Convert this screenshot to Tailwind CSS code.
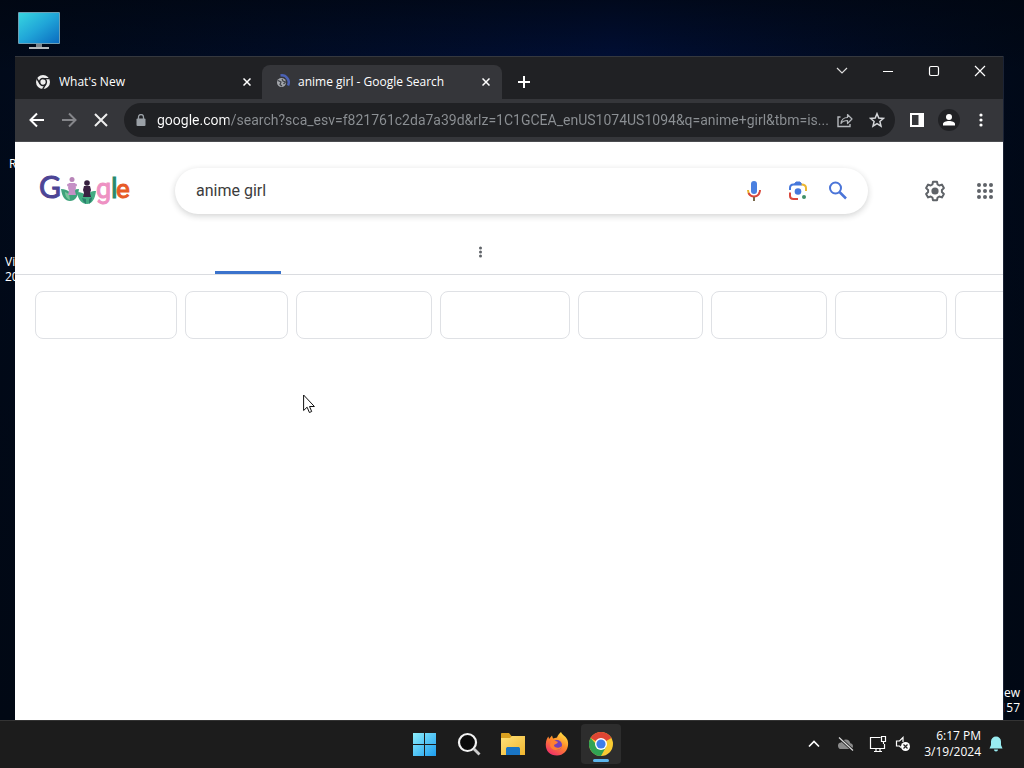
<!DOCTYPE html>
<html lang="en">
<head>
<meta charset="utf-8">
<meta name="viewport" content="width=device-width, initial-scale=1">
<title>anime girl - Google Search</title>
<script src="https://cdn.jsdelivr.net/npm/@tailwindcss/browser@4"></script>
</head>
<body class="flex h-screen flex-col overflow-hidden bg-[#010814] font-['Open_Sans','Noto_Sans',sans-serif]">

<main class="relative min-h-0 flex-1 overflow-hidden bg-linear-to-r from-[#010a1a] via-[#01103a] via-60% to-[#010918]">
  <div class="absolute inset-0 bg-linear-to-b from-[#010610]/70 via-transparent via-10% to-[#010814]"></div>

  <!-- Desktop icons -->
  <svg class="absolute top-3 left-[17px] h-[38px] w-11" viewBox="0 0 44 38" aria-label="This PC">
    <defs><linearGradient id="pc" x1="0" y1="0" x2="1" y2="1"><stop offset="0" stop-color="#37d5e0"/><stop offset=".5" stop-color="#20a5d8"/><stop offset="1" stop-color="#0b6cc0"/></linearGradient></defs>
    <rect x="1" y="0" width="42" height="32" rx="1" fill="#6f9fb4"/>
    <rect x="2" y="1" width="40" height="30" fill="url(#pc)"/>
    <path d="M19 32h6v4h-6z" fill="#7d858b"/><rect x="12" y="35" width="20" height="2" fill="#b4babd"/>
  </svg>
  <p class="absolute top-[156px] left-[9px] text-xs leading-[15px] text-white">R</p>
  <p class="absolute top-[254px] left-[5px] text-xs leading-[15px] text-white">Vi<br>20</p>
  <p class="absolute right-1 bottom-[5px] text-right text-xs leading-[15px] text-white">ew<br>157</p>

  <!-- Browser window -->
  <section class="absolute top-14 right-[21px] bottom-0 left-[15px] flex flex-col border-t border-[#35383e] bg-white shadow-[1px_0_0_#1b2335]">
    <div class="flex h-[42px] shrink-0 items-end bg-[#202124] text-xs text-white">
      <div class="ml-2 flex h-[34px] w-[239px] items-center pr-[7px] pl-3">
        <svg class="mr-2 size-4 shrink-0" viewBox="0 0 16 16"><circle cx="8" cy="8" r="7" fill="#eee"/><circle cx="8" cy="8" r="3.4" fill="none" stroke="#202124" stroke-width="1.5"/><path d="M8 4.6h6.4M5.1 9.8 1.8 4.3M10.9 9.8l-3.2 5.4" stroke="#202124" stroke-width="1.4"/></svg>
        <a href="#" class="flex-1 truncate">What's New</a>
        <button aria-label="Close What's New" class="grid size-4 place-items-center"><svg class="size-2" viewBox="0 0 8 8"><path d="M.5.5l7 7M7.500.5l-7 7" stroke="#fff" stroke-width="1.5"/></svg></button>
      </div>
      <div class="flex h-[34px] w-60 items-center rounded-t-lg bg-[#35363a] pr-2 pl-3">
        <svg class="mr-2 size-4 shrink-0" viewBox="0 0 16 16"><circle cx="7.500" cy="8.500" r="4.500" fill="#a4a7ac"/><path d="M4 6.500 7 8 6 10.500 8 12M8 5l1 2 2.500 1-2 2" fill="none" stroke="#3c3f45" stroke-width="1.200"/><path d="M6.500 1.500A7 7 0 0 1 14 11.500" fill="none" stroke="#4b62b5" stroke-width="2.500"/></svg>
        <a href="#" class="flex-1 truncate">anime girl - Google Search</a>
        <button aria-label="Close anime girl - Google Search" class="grid size-4 place-items-center"><svg class="size-2" viewBox="0 0 8 8"><path d="M.5.5l7 7M7.500.5l-7 7" stroke="#fff" stroke-width="1.5"/></svg></button>
      </div>
      <button aria-label="New tab" class="ml-2 grid h-[34px] w-7 place-items-center"><svg class="size-3" viewBox="0 0 12 12"><path d="M6 0v12M0 6h12" stroke="#fff" stroke-width="2"/></svg></button>
      <div class="ml-auto flex self-start">
        <button aria-label="Search tabs" class="grid h-7 w-[46px] place-items-center"><svg class="h-2 w-3" viewBox="0 0 12 8"><path d="M1 1l5 5 5-5" fill="none" stroke="#ddd" stroke-width="1.200"/></svg></button>
        <button aria-label="Minimize" class="grid h-7 w-[46px] place-items-center"><svg class="h-2 w-3" viewBox="0 0 12 8"><path d="M1 4.500h10" stroke="#fff"/></svg></button>
        <button aria-label="Maximize" class="grid h-7 w-[46px] place-items-center"><svg class="size-3" viewBox="0 0 12 12"><rect x="1.500" y="1.500" width="9" height="9" rx="1.500" fill="none" stroke="#fff" stroke-width="1.200"/></svg></button>
        <button aria-label="Close" class="grid h-7 w-[46px] place-items-center"><svg class="size-3" viewBox="0 0 12 12"><path d="M1 1l10 10M11 1 1 11" stroke="#fff" stroke-width="1.200"/></svg></button>
      </div>
    </div>

    <div class="flex h-[43px] shrink-0 items-center border-b border-[#4b4c50] bg-[#35363a] pr-1.5 pl-1.5">
      <button aria-label="Back" class="grid size-8 place-items-center"><svg class="size-4" viewBox="0 0 16 16"><path d="M15 8H2M8 1.500 1.500 8 8 14.500" fill="none" stroke="#fff" stroke-width="2"/></svg></button>
      <button aria-label="Forward" class="grid size-8 place-items-center"><svg class="size-4" viewBox="0 0 16 16"><path d="M1 8h13M8 1.500 14.500 8 8 14.500" fill="none" stroke="#85868a" stroke-width="2"/></svg></button>
      <button aria-label="Stop" class="grid size-8 place-items-center"><svg class="size-4" viewBox="0 0 16 16"><path d="M2 2l12 12M14 2 2 14" stroke="#eee" stroke-width="2"/></svg></button>
      <div class="ml-[7px] flex h-[34px] min-w-0 flex-1 items-center rounded-full bg-[#202124] pr-0.5 pl-3">
        <svg class="mr-[11px] h-3 w-2.5 shrink-0" viewBox="0 0 10 12"><rect x=".5" y="4.500" width="9" height="7.500" rx="1" fill="#9aa0a6"/><path d="M2.500 5V3a2.500 2.500 0 0 1 5 0v2" fill="none" stroke="#9aa0a6" stroke-width="1.300"/></svg>
        <input aria-label="Address" type="text" value="google.com/search?sca_esv=f821761c2da7a39d&amp;rlz=1C1GCEA_enUS1074US1094&amp;q=anime+girl&amp;tbm=is..." class="min-w-0 flex-1 bg-linear-[90deg,#ffffff_72px,#8c9094_72px] bg-clip-text font-[Roboto,sans-serif] text-sm text-transparent outline-none">
        <button aria-label="Share" class="grid size-8 place-items-center"><svg class="size-4" viewBox="0 0 16 16"><path d="M3.500 5H1v9.500h12V12" fill="none" stroke="#b5b8bc" stroke-width="1.400"/><path d="M4 11.500C4.500 7.500 7 5.500 10.500 5.500V2.500L15 7l-4.500 4.500V8.500C7.800 8.500 5.500 9.300 4 11.500z" fill="none" stroke="#b5b8bc" stroke-width="1.200" stroke-linejoin="round"/></svg></button>
        <button aria-label="Bookmark this tab" class="grid size-8 place-items-center"><svg class="size-4" viewBox="0 0 16 16"><path d="M8 1.700l1.800 4.300 4.700.4-3.600 3.100 1.100 4.600L8 11.700 4 14.100l1.100-4.600L1.500 6.400 6.200 6z" fill="none" stroke="#d5d7da" stroke-width="1.500"/></svg></button>
      </div>
      <button aria-label="Side panel" class="ml-1.5 grid size-8 place-items-center"><svg class="size-3.5" viewBox="0 0 14 14"><path d="M0 0h14v14H0zM2 2v10h6.500V2z" fill="#fff" fill-rule="evenodd"/></svg></button>
      <button aria-label="Profile" class="grid size-8 place-items-center"><svg class="size-[22px]" viewBox="0 0 22 22"><circle cx="11" cy="11" r="11" fill="#202124"/><circle cx="11" cy="8" r="3" fill="#fff"/><path d="M5 16.500v-1.500c0-4 12-4 12 0v1.500z" fill="#fff"/></svg></button>
      <button aria-label="Customize and control" class="grid size-8 place-items-center"><svg class="h-3.5 w-1" viewBox="0 0 4 14" fill="#fff"><circle cx="2" cy="2" r="1.600"/><circle cx="2" cy="7" r="1.600"/><circle cx="2" cy="12" r="1.600"/></svg></button>
    </div>

    <!-- Page -->
    <div class="min-h-0 flex-1 overflow-hidden bg-white">
      <header class="flex items-center pt-[26px] pr-2.5 pl-6">
        <a href="#" aria-label="Google" class="shrink-0"><svg class="h-9 w-[92px] overflow-visible" viewBox="0 0 92 36" font-family="Roboto, sans-serif" stroke-width="1">
          <text x="0" y="25" font-size="30" font-family="Lato, sans-serif" fill="#4d4595" stroke="#4d4595">G</text>
          <path d="M22 16c4 0 7 1 9 4 2-3 5-4 9-4-1 8-4 12-9 12s-8-4-9-12z" fill="#3fa27c"/>
          <path d="M26 19c0 4 2 7 5 8l-1-6z" fill="#78c59c"/>
          <path d="M38 19c4 0 7 1 9 4 2-3 5-5 10-5-1 8-4 13-9 13s-9-4-10-12z" fill="#43ac82"/>
          <path d="M43 25c1 3 2 5 4 6v-5zM53 24c0 3-1 5-3 7v-5z" fill="#2b806d"/>
          <circle cx="33" cy="6.500" r="2.500" fill="#b884b8"/><path d="M30 10h6l1 5-1 3 1 4h-8l1-4-1-3z" fill="#c590c6"/><circle cx="29.500" cy="12" r="1.500" fill="#c590c6"/><circle cx="36.500" cy="12" r="1.500" fill="#c590c6"/>
          <circle cx="48" cy="10" r="2.800" fill="#351f3e"/><path d="M45 13h6l1 4-1 3 1 4h-8l1-4-1-3z" fill="#3a2142"/>
          <text x="57" y="25" font-size="27" fill="#ee91c3" stroke="#ee91c3">g</text>
          <text x="72" y="25" font-size="27" fill="#26896f" stroke="#26896f">l</text>
          <text x="77" y="25" font-size="26" fill="#e75a27" stroke="#e75a27">e</text>
        </svg></a>
        <form class="ml-11 flex h-[46px] min-w-0 flex-1 items-center rounded-full bg-white pr-[18px] pl-[21px] shadow-[0_2px_6px_rgba(32,33,36,0.2)]">
          <input aria-label="Search" type="text" value="anime girl" class="min-w-0 flex-1 font-[Roboto,sans-serif] text-base text-[#3c3c3c] outline-none">
          <button type="button" aria-label="Search by voice" class="mr-5 shrink-0"><svg class="size-6" viewBox="0 0 24 24"><rect x="9" y="2" width="6" height="13" rx="3" fill="#4a80e0"/><path d="M6 11c0 3 1 4.200 2 5" fill="none" stroke="#e9b52c" stroke-width="2"/><path d="M6.500 14c1 2 3 3.500 5.500 3.500s4.500-1.500 5.500-3.500" fill="none" stroke="#d9483c" stroke-width="2"/><path d="M18 11c0 1.500-.3 2.700-1 3.500" fill="none" stroke="#d9483c" stroke-width="2"/><path d="M12 18v4" stroke="#7a6a4c" stroke-width="2"/></svg></button>
          <button type="button" aria-label="Search by image" class="mr-4 shrink-0"><svg class="size-6" viewBox="0 0 24 24" fill="none" stroke-width="2"><path d="M4 11V9c0-2 1.300-3.500 3.500-3.500H16" stroke="#4678dc"/><path d="M8.500 5l1.500-2h4l1.500 2z" fill="#4678dc" stroke="#4678dc" stroke-width="1"/><path d="M15.500 5.500C18.500 5.500 20 7 20 9v3" stroke="#edb732"/><path d="M4 13.500V17c0 2 1.300 3 3.500 3H12" stroke="#da483c"/><circle cx="12" cy="12.500" r="3.300" fill="#4678dc"/><circle cx="18" cy="18" r="2" fill="#3f8f68"/></svg></button>
          <button type="button" aria-label="Google Search" class="shrink-0"><svg class="size-6" viewBox="0 0 24 24" fill="none" stroke="#4a74d8" stroke-width="2"><circle cx="9.500" cy="9" r="5.500"/><path d="M13.500 13l6.500 6.500" stroke-width="2.500"/></svg></button>
        </form>
        <button aria-label="Settings" class="ml-[55px] shrink-0"><svg class="size-6" viewBox="0 0 24 24"><path d="M10 2.800h4l.6 2.700 1.700 1 2.600-.9 2 3.500-2 1.900v2l2 1.900-2 3.500-2.600-.9-1.700 1-.6 2.700h-4l-.6-2.700-1.700-1-2.600.9-2-3.500 2-1.900v-2l-2-1.900 2-3.500 2.600.9 1.700-1z" fill="none" stroke="#5f6368" stroke-width="2" stroke-linejoin="round"/><circle cx="12" cy="12" r="3.600" fill="#5f6368"/></svg></button>
        <button aria-label="Google apps" class="ml-[30px] shrink-0"><svg class="size-4" viewBox="0 0 16 16" fill="#5f6368"><circle cx="2" cy="2" r="2"/><circle cx="8" cy="2" r="2"/><circle cx="14" cy="2" r="2"/><circle cx="2" cy="8" r="2"/><circle cx="8" cy="8" r="2"/><circle cx="14" cy="8" r="2"/><circle cx="2" cy="14" r="2"/><circle cx="8" cy="14" r="2"/><circle cx="14" cy="14" r="2"/></svg></button>
      </header>
      <nav class="flex h-[61px] items-stretch border-b border-[#dadce0] pl-[200px]">
        <button aria-label="Images" class="w-[66px] border-b-3 border-[#3b73cc]"></button>
        <button aria-label="More" class="ml-[191px] grid w-4 place-items-center pt-4"><svg class="h-3 w-[3px]" viewBox="0 0 3 12" fill="#5f6368"><circle cx="1.500" cy="2" r="1.500"/><circle cx="1.500" cy="6" r="1.500"/><circle cx="1.500" cy="10" r="1.500"/></svg></button>
      </nav>
      <div class="flex gap-2 overflow-hidden pt-4 pl-5 [&>button]:h-12 [&>button]:shrink-0 [&>button]:rounded-lg [&>button]:border [&>button]:border-[#dfe1e5]">
        <button aria-label="Filter 1" class="w-[142px]"></button>
        <button aria-label="Filter 2" class="w-[103px]"></button>
        <button aria-label="Filter 3" class="w-[136px]"></button>
        <button aria-label="Filter 4" class="w-[130px]"></button>
        <button aria-label="Filter 5" class="w-[125px]"></button>
        <button aria-label="Filter 6" class="w-[116px]"></button>
        <button aria-label="Filter 7" class="w-[112px]"></button>
        <button aria-label="Filter 8" class="w-[120px]"></button>
      </div>
    </div>
  </section>

  <!-- Mouse pointer -->
  <svg class="absolute top-[394px] left-[303px] h-5 w-3" viewBox="0 0 12 20"><path d="M.6 1v15.500l3.500-3.300 2.300 5.300 2.300-1-2.200-5h4.900z" fill="#fff" stroke="#111" stroke-width="1"/></svg>
</main>

<!-- Taskbar -->
<footer class="grid h-12 shrink-0 grid-cols-[1fr_auto_1fr] items-center border-t border-[#333] bg-[#1c1c1c] text-white">
  <div></div>
  <div class="flex gap-1 pb-0.5 pl-0.5">
    <button aria-label="Start" class="grid size-10 place-items-center"><svg class="size-6" viewBox="0 0 24 24"><defs><linearGradient id="win" gradientUnits="userSpaceOnUse" x1="0" y1="0" x2="24" y2="24"><stop offset="0" stop-color="#8ff0fc"/><stop offset="1" stop-color="#1a9bee"/></linearGradient></defs><path d="M0 1h11v11H0zM12 1h11v11H12zM0 13h11v11H0zM12 13h11v11H12z" fill="url(#win)"/></svg></button>
    <button aria-label="Search" class="grid size-10 place-items-center"><svg class="size-6" viewBox="0 0 24 24"><circle cx="10.500" cy="10.500" r="8.500" fill="#0b0b0b" stroke="#f2f2f2" stroke-width="2.200"/><path d="M17 17l5.500 5.500" stroke="#ccc" stroke-width="2.800"/></svg></button>
    <button aria-label="File Explorer" class="grid size-10 place-items-center"><svg class="size-6" viewBox="0 0 24 24"><defs><linearGradient id="fold" x1="0" y1="0" x2="1" y2="1"><stop offset="0" stop-color="#ffe27a"/><stop offset="1" stop-color="#f0b52e"/></linearGradient></defs><path d="M0 2c0-1 .5-1 1-1h7l2.500 3H24v6H0z" fill="#d9a020"/><path d="M0 6h9l2-2h13v19H0z" fill="url(#fold)"/><path d="M5 23v-6c0-1.500.8-2 2-2h10c1.200 0 2 .5 2 2v6z" fill="#1975c5"/></svg></button>
    <button aria-label="Firefox" class="grid size-10 place-items-center"><svg class="size-6" viewBox="0 0 24 24"><defs><linearGradient id="fx" x1=".8" y1="0" x2=".2" y2="1"><stop offset="0" stop-color="#ffe545"/><stop offset=".45" stop-color="#ff8a2a"/><stop offset="1" stop-color="#f0286e"/></linearGradient></defs><path d="M16 0c1 3 5 4 6.500 8C25 16 19.500 23.500 12 23.500S.5 18.500.8 12C1 8.500 2 6 3.500 4.500L4 7l3-3.500 1 3 4-1c1-2.500 2-4 4-5.500z" fill="url(#fx)"/><circle cx="12" cy="13" r="5" fill="#7440b8"/><path d="M6 9c3-1 5 0 7 1-1 2-3 2-4 3 0 3 5 4 8 1-1 5-11 6-12-1z" fill="#ff8030"/></svg></button>
    <button aria-label="Google Chrome" class="relative grid size-10 place-items-center rounded-sm bg-[#2d2d2d]"><svg class="size-6" viewBox="0 0 24 24"><circle cx="12" cy="12" r="12" fill="#f9cb32"/><path d="M12 12 1.600 6A12 12 0 0 1 22.400 6z" fill="#df4534"/><path d="M12 12h-5L1.600 6A12 12 0 0 0 12 24l5-9z" fill="#31a354"/><circle cx="12" cy="12" r="6" fill="#fff"/><circle cx="12" cy="12" r="4.600" fill="#3f7de8"/></svg><span class="absolute bottom-0.5 left-3 h-[3px] w-4 rounded-full bg-[#5cb5ec]"></span></button>
  </div>
  <div class="flex items-center justify-end pr-5 pb-0.5">
    <button aria-label="Show hidden icons" class="grid h-8 w-8 place-items-center"><svg class="h-2 w-3" viewBox="0 0 12 8"><path d="M1 6.500l5-5 5 5" fill="none" stroke="#fff" stroke-width="1.700"/></svg></button>
    <button aria-label="OneDrive" class="grid h-8 w-8 place-items-center"><svg class="size-4" viewBox="0 0 16 16"><path d="M3.500 13a3.300 3.300 0 0 1-.4-6.600 5 5 0 0 1 9.300.8A3 3 0 0 1 13 13z" fill="#8b8b8b"/><path d="M1 1.500l14 13" stroke="#1c1c1c" stroke-width="3"/><path d="M1 1.500l14 13" stroke="#ddd" stroke-width="1.200"/></svg></button>
    <button aria-label="Network" class="grid h-8 w-8 place-items-center"><svg class="h-[18px] w-[18px]" viewBox="0 0 18 18" fill="none" stroke="#fff" stroke-width="1.200"><path d="M11.500 2.500H1.500v11h14V9M5 16.500h8M7 13.500v3M11 13.500v3M12.500 1.500h4v5h-4zM14.500 6.500V9"/></svg></button>
    <button aria-label="Volume muted" class="grid h-8 w-[18px] place-items-center"><svg class="size-4" viewBox="0 0 16 16"><path d="M8 6V1.500L4.500 5H1.500v5h3l1.500 1.500" fill="none" stroke="#fff" stroke-width="1.200"/><circle cx="10.500" cy="10.500" r="4.500" fill="#fff"/><path d="M8.500 8.500l4 4M12.500 8.500l-4 4" stroke="#222" stroke-width="1.200"/></svg></button>
    <button class="ml-3 text-right text-xs leading-4 whitespace-nowrap">6:17 PM<br>3/19/2024</button>
    <button aria-label="Notifications" class="ml-[7px] grid h-8 w-4 place-items-center"><svg class="size-4" viewBox="0 0 16 16"><path d="M8 .5a5 5 0 0 1 5 5v3.500l1.500 3.500h-13L3 9V5.500a5 5 0 0 1 5-5zM6 13.500h4a2 2 0 0 1-4 0z" fill="#99ebf0"/></svg></button>
  </div>
</footer>
</body>
</html>
